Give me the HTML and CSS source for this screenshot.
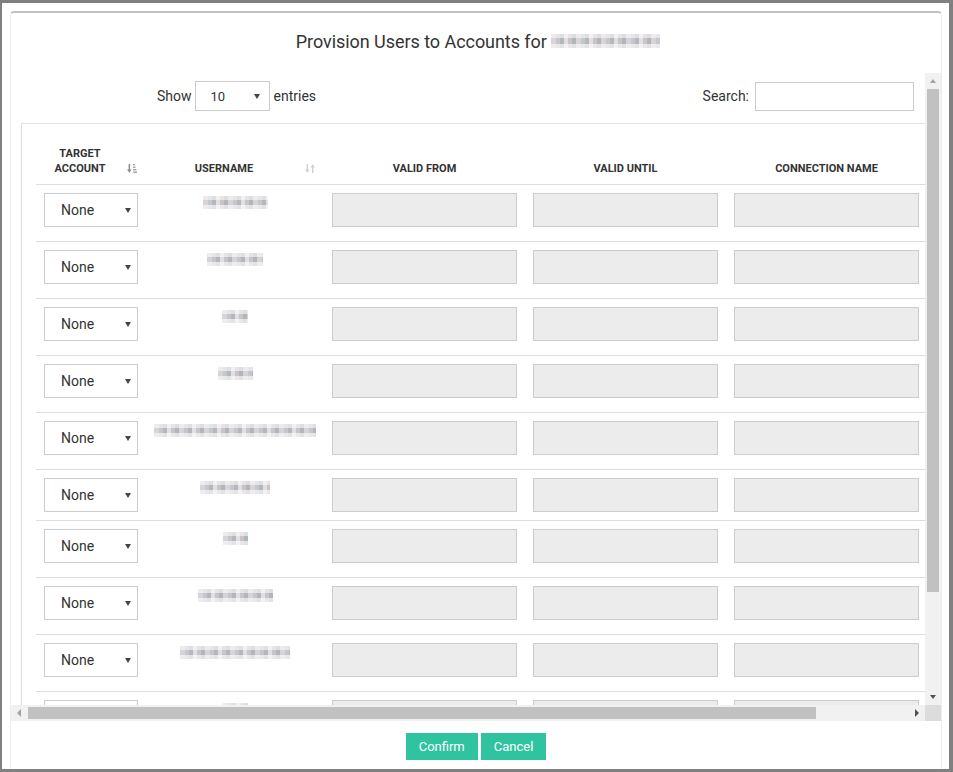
FILE: index.html
```html
<!DOCTYPE html>
<html lang="en">
<head>
<meta charset="utf-8">
<title>Provision Users to Accounts</title>
<link rel="stylesheet" href="styles.css">
</head>
<body>
<div class="frame">
  <div class="dialog">
    <h1 class="title">Provision Users to Accounts for <span class="blur blur-title" aria-hidden="true"></span></h1>
    <div class="scroller">
      <div class="viewport">
        <div class="toolbar">
          <div class="length">
            <span>Show</span>
            <div class="select select-len"><span>10</span><i class="caret"></i></div>
            <span>entries</span>
          </div>
          <div class="search">
            <span>Search:</span>
            <input class="search-input" type="text">
          </div>
        </div>
        <div class="table-wrap">
          <div class="grid">
            <div class="row head">
              <div class="th sortable"><span class="th-text">Target<br>Account</span><span class="sort-icon"><svg width="10" height="9" viewBox="0 0 10 9"><rect x="1.6" y="0" width="1.5" height="6" fill="#8c8c8c"/><polygon points="0,5.4 4.7,5.4 2.35,8.8" fill="#8c8c8c"/><rect x="6" y="0" width="1.8" height="1.3" fill="#9a9a9a"/><rect x="6" y="2.5" width="2.6" height="1.3" fill="#9a9a9a"/><rect x="6" y="5" width="3.3" height="1.3" fill="#9a9a9a"/><rect x="6" y="7.5" width="4" height="1.3" fill="#9a9a9a"/></svg></span></div>
              <div class="th sortable"><span class="th-text">Username</span><span class="sort-icon"><svg width="10" height="9" viewBox="0 0 10 9"><rect x="1.6" y="0" width="1.4" height="6" fill="#cfcfcf"/><polygon points="0,5.4 4.6,5.4 2.3,8.8" fill="#cfcfcf"/><rect x="7" y="3" width="1.4" height="6" fill="#cfcfcf"/><polygon points="5.4,3.6 10,3.6 7.7,0.2" fill="#cfcfcf"/></svg></span></div>
              <div class="th">Valid From</div>
              <div class="th">Valid Until</div>
              <div class="th">Connection Name</div>
            </div>

            <div class="row">
              <div class="cell"><div class="select"><span>None</span><i class="caret"></i></div></div>
              <div class="cell c-user"><span class="blur w65" aria-hidden="true"></span></div>
              <div class="cell"><input class="field" type="text" readonly></div>
              <div class="cell"><input class="field" type="text" readonly></div>
              <div class="cell"><input class="field" type="text" readonly></div>
            </div>
            <div class="row">
              <div class="cell"><div class="select"><span>None</span><i class="caret"></i></div></div>
              <div class="cell c-user"><span class="blur w56" aria-hidden="true"></span></div>
              <div class="cell"><input class="field" type="text" readonly></div>
              <div class="cell"><input class="field" type="text" readonly></div>
              <div class="cell"><input class="field" type="text" readonly></div>
            </div>
            <div class="row">
              <div class="cell"><div class="select"><span>None</span><i class="caret"></i></div></div>
              <div class="cell c-user"><span class="blur w26" aria-hidden="true"></span></div>
              <div class="cell"><input class="field" type="text" readonly></div>
              <div class="cell"><input class="field" type="text" readonly></div>
              <div class="cell"><input class="field" type="text" readonly></div>
            </div>
            <div class="row">
              <div class="cell"><div class="select"><span>None</span><i class="caret"></i></div></div>
              <div class="cell c-user"><span class="blur w35" aria-hidden="true"></span></div>
              <div class="cell"><input class="field" type="text" readonly></div>
              <div class="cell"><input class="field" type="text" readonly></div>
              <div class="cell"><input class="field" type="text" readonly></div>
            </div>
            <div class="row">
              <div class="cell"><div class="select"><span>None</span><i class="caret"></i></div></div>
              <div class="cell c-user"><span class="blur w164" aria-hidden="true"></span></div>
              <div class="cell"><input class="field" type="text" readonly></div>
              <div class="cell"><input class="field" type="text" readonly></div>
              <div class="cell"><input class="field" type="text" readonly></div>
            </div>
            <div class="row short">
              <div class="cell"><div class="select"><span>None</span><i class="caret"></i></div></div>
              <div class="cell c-user"><span class="blur w70" aria-hidden="true"></span></div>
              <div class="cell"><input class="field" type="text" readonly></div>
              <div class="cell"><input class="field" type="text" readonly></div>
              <div class="cell"><input class="field" type="text" readonly></div>
            </div>
            <div class="row">
              <div class="cell"><div class="select"><span>None</span><i class="caret"></i></div></div>
              <div class="cell c-user"><span class="blur w25" aria-hidden="true"></span></div>
              <div class="cell"><input class="field" type="text" readonly></div>
              <div class="cell"><input class="field" type="text" readonly></div>
              <div class="cell"><input class="field" type="text" readonly></div>
            </div>
            <div class="row">
              <div class="cell"><div class="select"><span>None</span><i class="caret"></i></div></div>
              <div class="cell c-user"><span class="blur w75" aria-hidden="true"></span></div>
              <div class="cell"><input class="field" type="text" readonly></div>
              <div class="cell"><input class="field" type="text" readonly></div>
              <div class="cell"><input class="field" type="text" readonly></div>
            </div>
            <div class="row">
              <div class="cell"><div class="select"><span>None</span><i class="caret"></i></div></div>
              <div class="cell c-user"><span class="blur w110" aria-hidden="true"></span></div>
              <div class="cell"><input class="field" type="text" readonly></div>
              <div class="cell"><input class="field" type="text" readonly></div>
              <div class="cell"><input class="field" type="text" readonly></div>
            </div>
            <div class="row">
              <div class="cell"><div class="select" aria-hidden="true"></div></div>
              <div class="cell c-user"><span class="blur w25" aria-hidden="true"></span></div>
              <div class="cell"><input class="field" type="text" readonly></div>
              <div class="cell"><input class="field" type="text" readonly></div>
              <div class="cell"><input class="field" type="text" readonly></div>
            </div>
          </div>
        </div>
      </div>
      <div class="vbar">
        <div class="sb-btn"><i class="tri-up"></i></div>
        <div class="vthumb"></div>
        <div class="sb-fill"></div>
        <div class="sb-btn"><i class="tri-down"></i></div>
      </div>
      <div class="hbar">
        <div class="sb-btn"><i class="tri-left"></i></div>
        <div class="hthumb"></div>
        <div class="sb-fill"></div>
        <div class="sb-btn"><i class="tri-right"></i></div>
      </div>
      <div class="corner"></div>
    </div>
    <div class="footer">
      <button class="btn" type="button">Confirm</button>
      <button class="btn" type="button">Cancel</button>
    </div>
  </div>
</div>
</body>
</html>
```

FILE: styles.css
```css
* { box-sizing: border-box; }

html, body {
  margin: 0;
  padding: 0;
  background: #fff;
}

body {
  font-family: Roboto, "Liberation Sans", Arial, sans-serif;
  color: #333;
}

.frame {
  width: 953px;
  height: 772px;
  border: 3px solid #808080;
  border-left-width: 2px;
  border-right-width: 4px;
  padding: 8px 7px 0 8px;
  display: flex;
  flex-direction: column;
  background: #fff;
}

.dialog {
  flex: 1;
  min-height: 0;
  display: flex;
  flex-direction: column;
  border-top: 2px solid #c2c2c2;
  border-left: 1px solid #ededed;
  border-right: 1px solid #ededed;
  border-radius: 4px 4px 0 0;
}

.title {
  margin: 0;
  padding-top: 17px;
  padding-left: 4px;
  font-size: 18px;
  line-height: 24px;
  font-weight: 400;
  letter-spacing: -0.05px;
  text-align: center;
  color: #333;
}

/* blurred (redacted) text placeholders */
.blur {
  display: inline-block;
  height: 13px;
  vertical-align: top;
  background:
    linear-gradient(to bottom, rgba(255,255,255,.55) 0 30%, rgba(255,255,255,0) 30% 68%, rgba(255,255,255,.6) 68% 100%),
    repeating-linear-gradient(90deg, #d9d3d7 0 5px, #c4c7cd 5px 9px, #b9b6bb 9px 13px, #e0e0e4 13px 17px, #cbc3c6 17px 21px, #b1b6bd 21px 25px);
}

.blur-title {
  width: 109px;
  height: 14px;
  vertical-align: baseline;
}

.w25 { width: 25px; }
.w26 { width: 26px; }
.w35 { width: 35px; }
.w56 { width: 56px; }
.w65 { width: 65px; }
.w70 { width: 70px; }
.w75 { width: 75px; }
.w110 { width: 110px; }
.w164 { width: 162px; }

/* scroll area */
.scroller {
  margin-top: 19px;
  display: grid;
  grid-template-columns: 914px 16px;
  grid-template-rows: 632px 16px;
}

.viewport {
  overflow: hidden;
}

.toolbar {
  height: 38px;
  padding: 8px 11px 0 146px;
  display: flex;
  justify-content: space-between;
  align-items: center;
  font-size: 14px;
  color: #333;
}

.length {
  display: flex;
  align-items: center;
  gap: 3px;
}

.select {
  height: 34px;
  border: 1px solid #ccc;
  background: #fff;
  display: flex;
  align-items: center;
  justify-content: space-between;
  padding: 0 6px 0 16px;
  font-size: 14px;
  color: #333;
}

.select-len {
  width: 75px;
  height: 30px;
  padding: 0 9px 0 15px;
  font-size: 13px;
  margin-right: 1px;
}

.caret {
  display: block;
  width: 0;
  height: 0;
  border-left: 3px solid transparent;
  border-right: 3px solid transparent;
  border-top: 5px solid #444;
}

.search {
  display: flex;
  align-items: center;
  gap: 6px;
}

.search-input {
  width: 159px;
  height: 29px;
  border: 1px solid #ccc;
  margin: 0;
  padding: 0 6px;
  font: inherit;
  outline: none;
}

.table-wrap {
  width: max-content;
  margin: 12px 0 0 10px;
  border-left: 1px solid #dedede;
  border-top: 1px solid #e3e3e3;
  padding: 0 15px 0 14px;
}

.grid {
  width: 891px;
}

.row {
  display: grid;
  grid-template-columns: 110px 178px 201px 201px 201px;
  height: 57px;
  border-bottom: 1px solid #dddddd;
}

.row.short { height: 51px; }

.row.head {
  height: 61px;
}

.th {
  display: flex;
  align-items: flex-end;
  justify-content: center;
  padding: 0 8px 8px;
  font-size: 11px;
  line-height: 15px;
  font-weight: 700;
  text-transform: uppercase;
  text-align: center;
  color: #333;
}

.th.sortable { padding-right: 0; }

.th-text {
  flex: 1;
  text-align: center;
}

.sort-icon {
  width: 30px;
  height: 15px;
  display: flex;
  align-items: center;
  justify-content: flex-end;
  padding-right: 9px;
}

.sort-icon svg { display: block; }

.cell {
  padding: 8px;
}

.c-user {
  padding: 11px 8px 0;
  text-align: center;
  line-height: 0;
}

.field {
  display: block;
  width: 185px;
  height: 34px;
  margin: 0;
  padding: 0;
  background: #ececec;
  border: 1px solid #ccc;
  outline: none;
}

/* drawn scrollbars */
.vbar {
  background: #f1f1f1;
  display: flex;
  flex-direction: column;
}

.hbar {
  background: #f1f1f1;
  display: flex;
}

.sb-btn {
  flex: none;
  width: 16px;
  height: 16px;
  display: flex;
  align-items: center;
  justify-content: center;
}

.sb-fill { flex: 1; }

.vthumb {
  flex: none;
  height: 503px;
  margin: 0 2px;
  background: #c1c1c1;
}

.hthumb {
  flex: none;
  width: 788px;
  margin: 2px 0 2px 1px;
  background: #c1c1c1;
}

.corner { background: #dcdcdc; }

.tri-up, .tri-down, .tri-left, .tri-right {
  display: block;
  width: 0;
  height: 0;
}

.tri-up {
  border-left: 3.5px solid transparent;
  border-right: 3.5px solid transparent;
  border-bottom: 4px solid #a3a3a3;
}

.tri-down {
  border-left: 3.5px solid transparent;
  border-right: 3.5px solid transparent;
  border-top: 4px solid #505050;
}

.tri-left {
  border-top: 4px solid transparent;
  border-bottom: 4px solid transparent;
  border-right: 4px solid #a3a3a3;
}

.tri-right {
  border-top: 4px solid transparent;
  border-bottom: 4px solid transparent;
  border-left: 4px solid #505050;
}

/* footer */
.footer {
  padding-top: 12px;
  display: flex;
  justify-content: center;
  gap: 3px;
}

.btn {
  height: 27px;
  padding: 0 13px;
  margin: 0;
  border: 0;
  border-radius: 0;
  background: #2fc3a0;
  color: #fff;
  font-family: Roboto, "Liberation Sans", Arial, sans-serif;
  font-size: 13px;
  line-height: 27px;
  cursor: pointer;
}
```
